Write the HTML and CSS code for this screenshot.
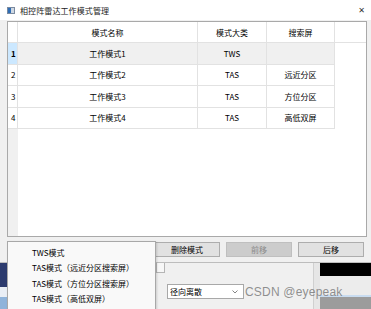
FILE: index.html
```html
<!DOCTYPE html>
<html lang="zh">
<head>
<meta charset="utf-8">
<title>相控阵雷达工作模式管理</title>
<link rel="stylesheet" href="styles.css">
</head>
<body>
<div class="screen">
  <div class="dialog">
    <div class="titlebar">
      <div class="app-icon"><span class="ic-a"></span><span class="ic-b"></span></div>
      <span class="title">相控阵雷达工作模式管理</span>
      <span class="close">✕</span>
    </div>
    <div class="body">
      <div class="table">
        <div class="grid">
          <div class="cell corner"></div>
          <div class="cell hd">模式名称</div>
          <div class="cell hd">模式大类</div>
          <div class="cell hd">搜索屏</div>
          <div class="cell tail"></div>

          <div class="cell rh sel">1</div>
          <div class="cell c hl">工作模式1</div>
          <div class="cell c hl">TWS</div>
          <div class="cell c hl"></div>
          <div class="cell tail"></div>

          <div class="cell rh">2</div>
          <div class="cell c">工作模式2</div>
          <div class="cell c">TAS</div>
          <div class="cell c">远近分区</div>
          <div class="cell tail"></div>

          <div class="cell rh">3</div>
          <div class="cell c">工作模式3</div>
          <div class="cell c">TAS</div>
          <div class="cell c">方位分区</div>
          <div class="cell tail"></div>

          <div class="cell rh">4</div>
          <div class="cell c">工作模式4</div>
          <div class="cell c">TAS</div>
          <div class="cell c">高低双屏</div>
          <div class="cell tail"></div>
        </div>
        <div class="filler"></div>
      </div>
      <div class="buttons">
        <button class="btn">删除模式</button>
        <button class="btn disabled">前移</button>
        <button class="btn">后移</button>
      </div>
    </div>
  </div>
  <div class="parent">
    <div class="navy"></div>
    <div class="under-popup"></div>
    <div class="mid">
      <div class="tabstub"></div>
      <div class="combo"><span>径向离散</span><svg class="chev" width="6" height="4" viewBox="0 0 6 4"><path d="M0.5 0.5 L3 3 L5.5 0.5" fill="none" stroke="#666" stroke-width="0.8"/></svg></div>
    </div>
    <div class="band"></div>
    <div class="right">
      <div class="black"></div>
      <div class="lightgray"></div>
      <div class="blueline"></div>
      <div class="darkgray"></div>
    </div>
  </div>
  <div class="popup">
    <div class="item">TWS模式</div>
    <div class="item">TAS模式（远近分区搜索屏）</div>
    <div class="item">TAS模式（方位分区搜索屏）</div>
    <div class="item">TAS模式（高低双屏）</div>
  </div>
  <div class="watermark">CSDN @eyepeak</div>
</div>
</body>
</html>
```
FILE: styles.css
```css
* { box-sizing: border-box; }
html, body { margin: 0; padding: 0; background: #f0f0f0; }
body {
  font-family: "Noto Sans CJK SC", "Noto Sans", sans-serif;
  font-size: 8px;
  color: #000;
}
.screen {
  position: relative;
  width: 371px;
  height: 309px;
  overflow: hidden;
  display: flex;
  flex-direction: column;
}
.dialog {
  height: 263px;
  background: #f0f0f0;
  border-bottom: 1px solid #bdbdbd;
  display: flex;
  flex-direction: column;
}
.titlebar {
  height: 20px;
  background: #fff;
  display: flex;
  align-items: center;
  padding-left: 7px;
  padding-right: 6px;
}
.app-icon {
  width: 8px;
  height: 7px;
  border: 1px solid #7a8aa0;
  background: #dfe6ee;
  display: flex;
  margin-right: 5px;
}
.ic-a { width: 3px; background: #2f6db5; }
.ic-b { flex: 1; background: #cfd8e2; }
.title { flex: 1; font-size: 8px; color: #222; letter-spacing: 0.1px; }
.close { font-size: 8px; color: #333; font-family: "DejaVu Sans", sans-serif; }
.body {
  flex: 1;
  display: flex;
  flex-direction: column;
  padding: 1px 4px 0 7px;
}
.table {
  height: 216px;
  border: 1px solid #a9a9a9;
  background: linear-gradient(to right, #f0f0f0 10px, #fff 10px);
  display: flex;
  flex-direction: column;
}
.grid {
  display: grid;
  grid-template-columns: 10px 180px 69px 68px 1fr;
  grid-template-rows: 21px 21.5px 21.5px 21.5px 21.5px;
}
.cell {
  display: flex;
  align-items: center;
  background: #fff;
  border-right: 1px solid #e2e2e2;
  border-bottom: 1px solid #e2e2e2;
  white-space: nowrap;
}
.corner { background: #fff; }
.hd { justify-content: center; background: #fff; }
.tail { border-right: none; border-bottom: none; background: #fff; }
.grid .cell:nth-child(5) { border-bottom: 1px solid #e2e2e2; }
.rh { padding-left: 3px; background: #fff; }
.rh.sel { background: #cce8ff; font-weight: bold; }
.c { justify-content: center; }
.hl { background: #f0f0f0; }
.filler { flex: 1; }
.buttons {
  display: flex;
  justify-content: flex-end;
  gap: 6px;
  margin-top: 5px;
  padding-right: 3px;
}
.btn {
  width: 66px;
  height: 15px;
  padding: 0;
  border: 1px solid #adadad;
  background: #e1e1e1;
  font-family: "Noto Sans CJK SC", sans-serif;
  font-size: 8px;
  color: #000;
}
.btn.disabled { background: #cccccc; border-color: #bfbfbf; color: #8a8a8a; }
.parent {
  flex: 1;
  display: flex;
  background: #f0f0f0;
}
.navy { width: 7px; background: linear-gradient(to bottom, #2c3b6e 0, #2c3b6e 24px, #e9eef5 24px, #e9eef5 34px, #8fb3da 34px); }
.under-popup { width: 148px; }
.mid {
  width: 158px;
  display: flex;
  flex-direction: column;
  border-left: 1px solid #a0a0a0;
}
.tabstub {
  width: 9px;
  height: 10px;
  border: 1px solid #b5b5b5;
  border-top: none;
  background: #f7f7f7;
}
.combo {
  margin: 11px 0 0 11px;
  width: 77px;
  height: 15px;
  border: 1px solid #a8a8a8;
  background: #fff;
  display: flex;
  align-items: center;
  justify-content: space-between;
  padding: 0 5px 0 2px;
}
.band { width: 7px; background: #e6e6e6; border-left: 1px solid #d0d0d0; }
.right { flex: 1; display: flex; flex-direction: column; }
.black { height: 13px; background: #000; }
.lightgray { height: 19px; background: #ececec; }
.blueline { height: 2px; background: #c9dcf0; }
.darkgray { flex: 1; background: #9c9c9c; }
.popup {
  position: absolute;
  left: 7px;
  top: 241px;
  width: 149px;
  height: 72px;
  background: #f9f9f9;
  border: 1px solid #a8a8a8;
  padding: 3px 0 0 24px;
  box-shadow: 1px 1px 2px rgba(0,0,0,0.15);
}
.item { height: 15.3px; display: flex; align-items: center; white-space: nowrap; font-size: 8px; }
.watermark {
  position: absolute;
  left: 245px;
  top: 285px;
  font-family: "Liberation Sans", Arial, sans-serif;
  font-size: 12px;
  color: rgba(110,110,110,0.75);
  letter-spacing: 0.2px;
}
```
